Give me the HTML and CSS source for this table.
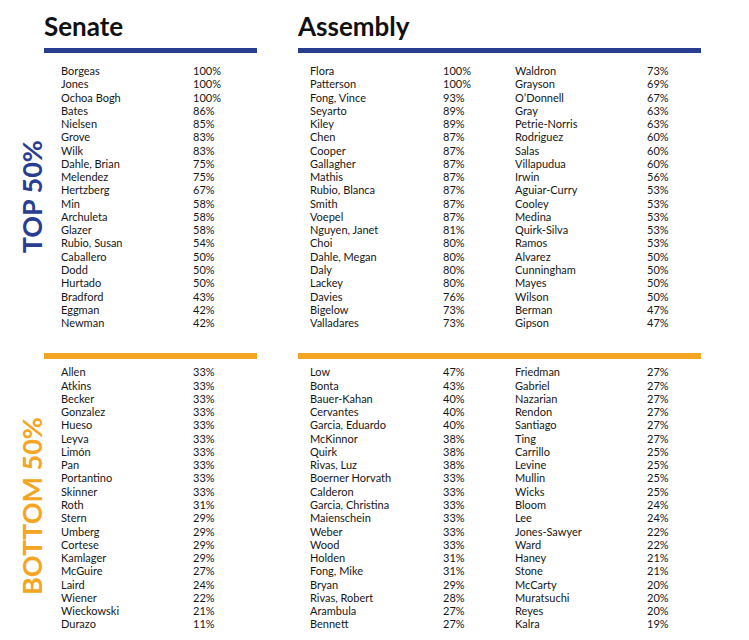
FILE: index.html
```html
<!DOCTYPE html>
<html lang="en">
<head>
<meta charset="utf-8">
<title>Senate and Assembly scores</title>
<link rel="stylesheet" href="styles.css">
</head>
<body>
<div class="page">
  <h1 class="heading heading-senate">Senate</h1>
  <h1 class="heading heading-assembly">Assembly</h1>

  <div class="bar bar-blue bar-senate"></div>
  <div class="bar bar-blue bar-assembly"></div>

  <div class="label-cell label-top"><span class="side-label side-label-blue">TOP 50%</span></div>

  <div class="list list-senate list-row-top">
    <span>Borgeas</span><span>100%</span>
    <span>Jones</span><span>100%</span>
    <span>Ochoa Bogh</span><span>100%</span>
    <span>Bates</span><span>86%</span>
    <span>Nielsen</span><span>85%</span>
    <span>Grove</span><span>83%</span>
    <span>Wilk</span><span>83%</span>
    <span>Dahle, Brian</span><span>75%</span>
    <span>Melendez</span><span>75%</span>
    <span>Hertzberg</span><span>67%</span>
    <span>Min</span><span>58%</span>
    <span>Archuleta</span><span>58%</span>
    <span>Glazer</span><span>58%</span>
    <span>Rubio, Susan</span><span>54%</span>
    <span>Caballero</span><span>50%</span>
    <span>Dodd</span><span>50%</span>
    <span>Hurtado</span><span>50%</span>
    <span>Bradford</span><span>43%</span>
    <span>Eggman</span><span>42%</span>
    <span>Newman</span><span>42%</span>
  </div>

  <div class="assembly-lists list-row-top">
    <div class="list list-a1">
      <span>Flora</span><span>100%</span>
      <span>Patterson</span><span>100%</span>
      <span>Fong, Vince</span><span>93%</span>
      <span>Seyarto</span><span>89%</span>
      <span>Kiley</span><span>89%</span>
      <span>Chen</span><span>87%</span>
      <span>Cooper</span><span>87%</span>
      <span>Gallagher</span><span>87%</span>
      <span>Mathis</span><span>87%</span>
      <span>Rubio, Blanca</span><span>87%</span>
      <span>Smith</span><span>87%</span>
      <span>Voepel</span><span>87%</span>
      <span>Nguyen, Janet</span><span>81%</span>
      <span>Choi</span><span>80%</span>
      <span>Dahle, Megan</span><span>80%</span>
      <span>Daly</span><span>80%</span>
      <span>Lackey</span><span>80%</span>
      <span>Davies</span><span>76%</span>
      <span>Bigelow</span><span>73%</span>
      <span>Valladares</span><span>73%</span>
    </div>
    <div class="list list-a2">
      <span>Waldron</span><span>73%</span>
      <span>Grayson</span><span>69%</span>
      <span>O’Donnell</span><span>67%</span>
      <span>Gray</span><span>63%</span>
      <span>Petrie-Norris</span><span>63%</span>
      <span>Rodriguez</span><span>60%</span>
      <span>Salas</span><span>60%</span>
      <span>Villapudua</span><span>60%</span>
      <span>Irwin</span><span>56%</span>
      <span>Aguiar-Curry</span><span>53%</span>
      <span>Cooley</span><span>53%</span>
      <span>Medina</span><span>53%</span>
      <span>Quirk-Silva</span><span>53%</span>
      <span>Ramos</span><span>53%</span>
      <span>Alvarez</span><span>50%</span>
      <span>Cunningham</span><span>50%</span>
      <span>Mayes</span><span>50%</span>
      <span>Wilson</span><span>50%</span>
      <span>Berman</span><span>47%</span>
      <span>Gipson</span><span>47%</span>
    </div>
  </div>

  <div class="bar bar-orange bar-senate bar-row-bottom"></div>
  <div class="bar bar-orange bar-assembly bar-row-bottom"></div>

  <div class="label-cell label-bottom"><span class="side-label side-label-orange">BOTTOM 50%</span></div>

  <div class="list list-senate list-row-bottom">
    <span>Allen</span><span>33%</span>
    <span>Atkins</span><span>33%</span>
    <span>Becker</span><span>33%</span>
    <span>Gonzalez</span><span>33%</span>
    <span>Hueso</span><span>33%</span>
    <span>Leyva</span><span>33%</span>
    <span>Limón</span><span>33%</span>
    <span>Pan</span><span>33%</span>
    <span>Portantino</span><span>33%</span>
    <span>Skinner</span><span>33%</span>
    <span>Roth</span><span>31%</span>
    <span>Stern</span><span>29%</span>
    <span>Umberg</span><span>29%</span>
    <span>Cortese</span><span>29%</span>
    <span>Kamlager</span><span>29%</span>
    <span>McGuire</span><span>27%</span>
    <span>Laird</span><span>24%</span>
    <span>Wiener</span><span>22%</span>
    <span>Wieckowski</span><span>21%</span>
    <span>Durazo</span><span>11%</span>
  </div>

  <div class="assembly-lists list-row-bottom">
    <div class="list list-a1">
      <span>Low</span><span>47%</span>
      <span>Bonta</span><span>43%</span>
      <span>Bauer-Kahan</span><span>40%</span>
      <span>Cervantes</span><span>40%</span>
      <span>Garcia, Eduardo</span><span>40%</span>
      <span>McKinnor</span><span>38%</span>
      <span>Quirk</span><span>38%</span>
      <span>Rivas, Luz</span><span>38%</span>
      <span>Boerner Horvath</span><span>33%</span>
      <span>Calderon</span><span>33%</span>
      <span>Garcia, Christina</span><span>33%</span>
      <span>Maienschein</span><span>33%</span>
      <span>Weber</span><span>33%</span>
      <span>Wood</span><span>33%</span>
      <span>Holden</span><span>31%</span>
      <span>Fong, Mike</span><span>31%</span>
      <span>Bryan</span><span>29%</span>
      <span>Rivas, Robert</span><span>28%</span>
      <span>Arambula</span><span>27%</span>
      <span>Bennett</span><span>27%</span>
    </div>
    <div class="list list-a2">
      <span>Friedman</span><span>27%</span>
      <span>Gabriel</span><span>27%</span>
      <span>Nazarian</span><span>27%</span>
      <span>Rendon</span><span>27%</span>
      <span>Santiago</span><span>27%</span>
      <span>Ting</span><span>27%</span>
      <span>Carrillo</span><span>25%</span>
      <span>Levine</span><span>25%</span>
      <span>Mullin</span><span>25%</span>
      <span>Wicks</span><span>25%</span>
      <span>Bloom</span><span>24%</span>
      <span>Lee</span><span>24%</span>
      <span>Jones-Sawyer</span><span>22%</span>
      <span>Ward</span><span>22%</span>
      <span>Haney</span><span>21%</span>
      <span>Stone</span><span>21%</span>
      <span>McCarty</span><span>20%</span>
      <span>Muratsuchi</span><span>20%</span>
      <span>Reyes</span><span>20%</span>
      <span>Kalra</span><span>19%</span>
    </div>
  </div>
</div>
</body>
</html>
```

FILE: styles.css
```css
html, body {
  margin: 0;
  padding: 0;
  background: #ffffff;
}

body {
  font-family: Lato, "Open Sans", "Liberation Sans", sans-serif;
  color: #161616;
}

.page {
  display: grid;
  grid-template-columns: 44px 213px 41px 403px;
  grid-template-rows: auto auto auto auto auto;
}

.heading {
  margin: 0;
  padding-top: 11px;
  font-size: 26px;
  line-height: 31px;
  font-weight: 700;
  color: #111111;
}

.heading-senate {
  grid-column: 2;
  grid-row: 1;
}

.heading-assembly {
  grid-column: 4;
  grid-row: 1;
}

.bar {
  height: 5px;
  margin-top: 6px;
}

.bar-blue {
  grid-row: 2;
  background: #293e90;
}

.bar-orange {
  background: #f5a524;
}

.bar-senate {
  grid-column: 2;
}

.bar-assembly {
  grid-column: 4;
}

.bar-row-bottom {
  grid-row: 4;
  height: 6px;
  margin-top: 24px;
}

.list-row-top {
  grid-row: 3;
  margin-top: 11px;
}

.list-row-bottom {
  grid-row: 5;
  margin-top: 6px;
}

.list {
  display: grid;
  font-size: 11px;
  line-height: 13.27px;
}

.list-senate {
  grid-column: 2;
  grid-template-columns: 132px auto;
  padding-left: 17px;
}

.assembly-lists {
  grid-column: 4;
  display: flex;
  padding-left: 12px;
}

.list-a1 {
  grid-template-columns: 133px 72px;
}

.list-a2 {
  grid-template-columns: 132px auto;
}

.label-cell {
  grid-column: 1;
  display: flex;
  align-items: center;
  padding-left: 18px;
}

.label-top {
  grid-row: 3;
  margin-top: 11px;
}

.label-bottom {
  grid-row: 5;
  margin-top: 6px;
  padding-top: 16px;
}

.side-label {
  writing-mode: vertical-rl;
  transform: rotate(180deg);
  font-size: 27px;
  line-height: 27px;
  font-weight: 700;
  white-space: nowrap;
}

.side-label-blue {
  color: #293e90;
}

.side-label-orange {
  color: #f5a524;
}
```
